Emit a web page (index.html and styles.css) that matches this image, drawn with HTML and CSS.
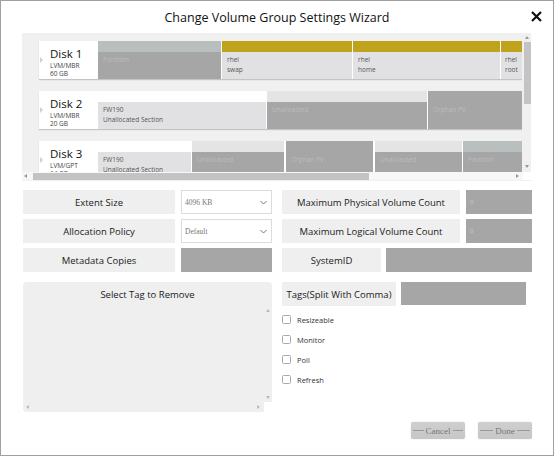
FILE: index.html
```html
<!DOCTYPE html>
<html>
<head>
<meta charset="utf-8">
<link rel="stylesheet" href="styles.css">
</head>
<body>
<div class="window">
  <header class="titlebar">
    <span></span>
    <h1 class="title">Change Volume Group Settings Wizard</h1>
    <span class="close-wrap"><svg class="close" width="11" height="11" viewBox="0 0 11 11"><path d="M1 1L10 10M10 1L1 10" stroke="#111" stroke-width="2.2" fill="none"/></svg></span>
  </header>

  <section class="disks">
    <div class="disk-view">
      <div class="disk-rows">
        <div class="disk-row">
          <div class="disk-card"><div class="disk-name">Disk 1</div><div class="disk-meta">LVM/MBR</div><div class="disk-meta">60 GB</div></div>
          <div class="cell w123"><div class="stripe s-part"></div><div class="body b-dark">Partition</div></div>
          <div class="cell w130"><div class="stripe s-gold"></div><div class="body b-light">rhel<br>swap</div></div>
          <div class="cell w147"><div class="stripe s-gold"></div><div class="body b-light">rhel<br>home</div></div>
          <div class="cell w22"><div class="stripe s-gold"></div><div class="body b-light tight">rhel<br>root</div></div>
        </div>
        <div class="disk-row">
          <div class="disk-card"><div class="disk-name">Disk 2</div><div class="disk-meta">LVM/MBR</div><div class="disk-meta">20 GB</div></div>
          <div class="cell w168"><div class="stripe s-white"></div><div class="body b-light">FW190<br>Unallocated Section</div></div>
          <div class="cell w160"><div class="stripe s-unal"></div><div class="body b-dark">Unalloacted</div></div>
          <div class="cell w95"><div class="stripe s-dark"></div><div class="body b-dark">Orphan PV</div></div>
        </div>
        <div class="disk-row">
          <div class="disk-card"><div class="disk-name">Disk 3</div><div class="disk-meta">LVM/GPT</div><div class="disk-meta">64 GB</div></div>
          <div class="cell w93"><div class="stripe s-white"></div><div class="body b-light">FW190<br>Unallocated Section</div></div>
          <div class="cell w92"><div class="stripe s-unal"></div><div class="body b-dark">Unalloacted</div></div>
          <div class="cell w87 gap2"><div class="stripe s-dark"></div><div class="body b-dark">Orphan PV</div></div>
          <div class="cell w87 gap2"><div class="stripe s-unal"></div><div class="body b-dark">Unalloacted</div></div>
          <div class="cell w60"><div class="stripe s-part"></div><div class="body b-dark">Partition</div></div>
        </div>
      </div>
      <div class="vscroll">
        <i class="arrow ar-up"></i>
        <i class="vthumb"></i>
        <i class="arrow ar-down push-down"></i>
      </div>
    </div>
    <div class="hscroll-row">
      <div class="hscroll">
        <i class="arrow ar-left"></i>
        <i class="hthumb"></i>
        <i class="arrow ar-right push-right"></i>
      </div>
      <div class="corner"></div>
    </div>
  </section>

  <section class="form">
    <div class="pair">
      <div class="label wide">Extent Size</div>
      <div class="select"><span>4096 KB</span><svg width="7" height="5" viewBox="0 0 7 5"><path d="M0.5 1L3.5 4L6.5 1" stroke="#777" fill="none"/></svg></div>
    </div>
    <div class="pair">
      <div class="label rwide">Maximum Physical Volume Count</div>
      <div class="input small">0</div>
    </div>
    <div class="pair">
      <div class="label wide">Allocation Policy</div>
      <div class="select"><span>Default</span><svg width="7" height="5" viewBox="0 0 7 5"><path d="M0.5 1L3.5 4L6.5 1" stroke="#777" fill="none"/></svg></div>
    </div>
    <div class="pair">
      <div class="label rwide">Maximum Logical Volume Count</div>
      <div class="input small">0</div>
    </div>
    <div class="pair">
      <div class="label wide">Metadata Copies</div>
      <div class="input mid"></div>
    </div>
    <div class="pair">
      <div class="label sys">SystemID</div>
      <div class="input grow"></div>
    </div>
  </section>

  <section class="lower">
    <div class="tagbox">
      <div class="tagbox-title">Select Tag to Remove</div>
      <div class="tagbox-main">
        <div class="tagbox-list"></div>
        <div class="tag-vscroll"><i class="arrow ar-up"></i><i class="arrow ar-down push-down"></i></div>
      </div>
      <div class="tagbox-bottom">
        <div class="tag-hscroll"><i class="arrow ar-left"></i><i class="arrow ar-right push-right"></i></div>
        <div class="tag-corner"></div>
      </div>
    </div>
    <div class="side">
      <div class="pair tags">
        <div class="label tlabel">Tags(Split With Comma)</div>
        <div class="input tinput"></div>
      </div>
      <div class="checks">
        <div class="check"><span class="box"></span>Resizeable</div>
        <div class="check"><span class="box"></span>Monitor</div>
        <div class="check"><span class="box"></span>Poll</div>
        <div class="check"><span class="box"></span>Refresh</div>
      </div>
      <div class="buttons">
        <button class="btn">Cancel</button>
        <button class="btn">Done</button>
      </div>
    </div>
  </section>
</div>
</body>
</html>
```

FILE: styles.css
```css
* { box-sizing: border-box; margin: 0; padding: 0; }
html, body { width: 554px; height: 456px; overflow: hidden; background: #fff; }
body { font-family: "Open Sans", "Noto Sans", sans-serif; color: #222; }

.window {
  width: 554px; height: 456px;
  border: 1px solid #a0a0a0;
  background: #fff;
  display: flex; flex-direction: column;
}

.titlebar {
  height: 32px;
  display: grid;
  grid-template-columns: 1fr auto 1fr;
  align-items: center;
}
.title { font-size: 12.5px; font-weight: 400; color: #111; padding-top: 1px; }
.close-wrap { justify-self: end; padding-right: 11px; display: flex; padding-bottom: 1px; }

/* generic scroll arrows */
.arrow { display: block; width: 0; height: 0; flex: none; }
.ar-up { border-bottom: 3px solid #999; border-left: 2px solid transparent; border-right: 2px solid transparent; }
.ar-down { border-top: 3px solid #999; border-left: 2px solid transparent; border-right: 2px solid transparent; }
.ar-left { border-right: 3px solid #999; border-top: 2px solid transparent; border-bottom: 2px solid transparent; }
.ar-right { border-left: 3px solid #999; border-top: 2px solid transparent; border-bottom: 2px solid transparent; }
.push-down { margin-top: auto; }
.push-right { margin-left: auto; }

/* disks panel */
.disks {
  margin-left: 21px;
  width: 509px;
  height: 148px;
  background: #f0f0f0;
  display: flex; flex-direction: column;
}
.disk-view { display: flex; height: 139px; }
.disk-rows {
  width: 500px; height: 139px; overflow: hidden; flex: none;
  padding: 8px 0 0 17px;
  display: flex; flex-direction: column; gap: 12px;
}
.disk-row {
  display: flex; height: 38px; width: 483px; flex: none;
  background: #fff;
  box-shadow: 0 1px 1px #c4c4c4;
}
.disk-card { width: 59px; flex: none; padding: 7px 0 0 11px; position: relative; line-height: 1; }
.disk-card::before {
  content: ""; position: absolute; left: 1px; top: 16px;
  border-left: 3px solid #d0d0d0; border-top: 3px solid transparent; border-bottom: 3px solid transparent;
}
.disk-name { font-size: 11.5px; color: #111; margin-bottom: 2px; }
.disk-meta { font-size: 6.5px; color: #444; line-height: 8px; }

.cell { display: flex; flex-direction: column; flex: none; margin-left: 1px; }
.cell.gap2 { margin-left: 2px; }
.w123 { width: 123px; margin-left: 0; }
.w130 { width: 130px; }
.w147 { width: 147px; }
.w22 { width: 21px; }
.w168 { width: 168px; margin-left: 0; }
.w160 { width: 160px; }
.w95 { width: 94px; }
.w93 { width: 93px; margin-left: 0; }
.w92 { width: 92px; }
.w87 { width: 87px; }
.w60 { width: 59px; }
.stripe { height: 11px; }
.s-part { background: #b9bfbe; }
.s-gold { background: #bfa31c; }
.s-white { background: #fff; }
.s-unal { background: #e4e4e4; }
.s-dark { background: #a6a6a6; }
.body { flex: 1; font-size: 6.5px; line-height: 10px; padding: 3px 0 0 5px; overflow: hidden; }
.body.tight { padding-left: 4px; }
.b-dark { background: #a6a6a6; color: #bcbcbc; }
.b-light { background: #e1e1e3; color: #555; }

.vscroll {
  width: 8px; height: 139px; margin-left: 1px; flex: none;
  display: flex; flex-direction: column; align-items: center;
  padding: 3px 0 4px;
  background: #f0f0f0;
}
.vthumb { display: block; width: 7px; height: 62px; background: #c3c3c3; margin-top: 3px; flex: none; }

.hscroll-row { display: flex; height: 8px; }
.hscroll { width: 501px; flex: none; display: flex; align-items: center; background: #f7f7f7; padding: 0 4px 0 2px; }
.hthumb { display: block; width: 336px; height: 7px; background: #c3c3c3; margin-left: 6px; flex: none; }
.corner { width: 8px; background: #fff; }

/* form */
.form {
  margin: 9px 0 0 22px;
  width: 509px;
  display: grid;
  grid-template-columns: 249px 250px;
  column-gap: 10px;
  row-gap: 5px;
}
.pair { display: flex; gap: 6px; height: 24px; }
.label {
  background: #efefef; font-size: 9.5px; color: #1a1a1a;
  display: flex; align-items: center; justify-content: center;
}
.wide { width: 152px; }
.rwide { width: 178px; }
.sys { width: 99px; }
.pair .sys + .input { margin-left: -1px; }
.select {
  width: 91px; background: #fff; border: 1px solid #dcdcdc;
  display: flex; align-items: center; justify-content: space-between;
  padding: 0 4px 0 3px;
  font-family: "Liberation Serif", serif; font-size: 7.5px; color: #777;
}
.input {
  background: #a6a6a6; font-size: 6px; color: #cfcfcf;
  display: flex; align-items: center; padding-left: 4px;
}
.small { width: 66px; }
.mid { width: 91px; }
.grow { flex: 1; }

/* lower */
.lower {
  margin: 10px 0 0 22px;
  display: flex; gap: 10px;
}
.tagbox {
  width: 249px; height: 130px; flex: none;
  background: #efefef; border-radius: 4px;
  display: flex; flex-direction: column;
}
.tagbox-title { height: 22px; font-size: 9.5px; text-align: center; padding-top: 6px; color: #1a1a1a; }
.tagbox-main { flex: 1; display: flex; }
.tagbox-list { flex: 1; }
.tag-vscroll { width: 8px; display: flex; flex-direction: column; align-items: center; padding: 5px 0 3px; }
.tag-vscroll .ar-up { border-bottom-color: #bbb; }
.tag-vscroll .ar-down { border-top-color: #bbb; }
.tagbox-bottom { height: 10px; display: flex; }
.tag-hscroll { flex: 1; display: flex; align-items: center; padding: 0 4px 0 3px; }
.tag-hscroll .ar-left { border-right-color: #bbb; }
.tag-hscroll .ar-right { border-left-color: #bbb; }
.tag-corner { width: 8px; background: #fff; }

.side { width: 250px; display: flex; flex-direction: column; }
.tags { gap: 5px; }
.tlabel { width: 114px; }
.tinput { width: 125px; height: 23px; }
.checks { display: flex; flex-direction: column; gap: 9px; margin-top: 8px; }
.check { display: flex; align-items: center; gap: 6px; font-size: 7.5px; color: #333; height: 11px; }
.box { width: 9px; height: 9px; border: 1px solid #aaa; border-radius: 1.5px; background: #fff; flex: none; }
.buttons { display: flex; justify-content: flex-end; gap: 13px; margin-top: 37px; }
.btn {
  width: 54px; height: 17px; border: none; border-radius: 2px;
  background: linear-gradient(#cfcfcf, #c6c6c6);
  box-shadow: 0 0 1px #b8b8b8;
  font-family: "Liberation Serif", serif; font-size: 9px; color: #777;
  display: flex; align-items: center; gap: 2px; padding: 0 2px;
}
.btn::before, .btn::after { content: ""; flex: 1; height: 1px; background: #999; }
```
